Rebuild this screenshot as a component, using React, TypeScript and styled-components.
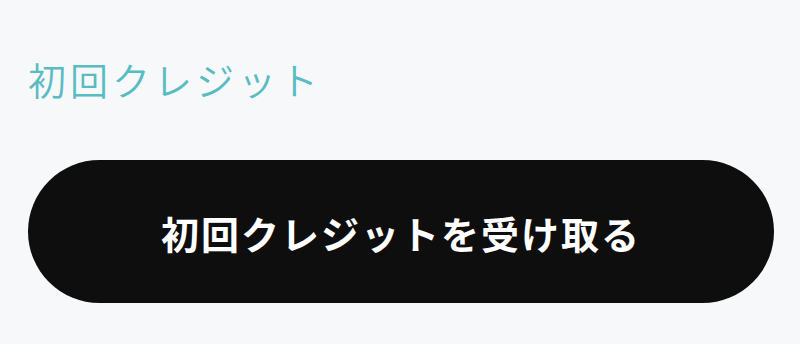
import React from 'react';
import styled, {createGlobalStyle} from 'styled-components';

const GlobalStyle = createGlobalStyle`
  html, body {
    margin: 0;
    padding: 0;
    background: #f7f8fa;
  }
  body {
    font-family: "Noto Sans CJK JP", "Noto Sans", sans-serif;
  }
`

const Page = styled.div`
  width: 800px;
  height: 344px;
  box-sizing: border-box;
  padding: 52px 26px 0 28px;
  display: flex;
  flex-direction: column;
`

const Title = styled.h2`
  margin: 0;
  font-size: 38px;
  font-weight: 350;
  line-height: 54px;
  letter-spacing: 4px;
  color: #58bcc2;
`

const ClaimButton = styled.button`
  margin-top: 54px;
  height: 143px;
  width: 100%;
  border: none;
  border-radius: 72px;
  background: #0e0e0e;
  color: #fff;
  font-family: "Noto Sans CJK JP", "Noto Sans", sans-serif;
  font-size: 38px;
  font-weight: 700;
  letter-spacing: 2px;
  padding-top: 3px;
  cursor: pointer;
`

export default function App() {
  return (
    <>
      <GlobalStyle />
      <Page>
        <Title>初回クレジット</Title>
        <ClaimButton>初回クレジットを受け取る</ClaimButton>
      </Page>
    </>
  );
}
